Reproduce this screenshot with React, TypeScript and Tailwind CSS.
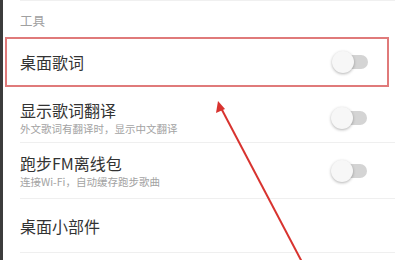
import React from "react";

function Toggle() {
  return (
    <div className="relative h-[22px] w-[36px] shrink-0">
      <div className="absolute left-[6px] right-0 top-[4px] h-[14px] rounded-full bg-[#d4d4d4]" />
      <div className="absolute left-0 top-0 h-[22px] w-[22px] rounded-full bg-[#f7f7f7] shadow-[0_1px_3px_rgba(0,0,0,0.3)]" />
    </div>
  );
}

function Row({ title, sub, toggle, pr = "pr-[28px]" }: { title: string; sub?: string; toggle?: boolean; pr?: string }) {
  return (
    <div className={"flex flex-1 items-center justify-between " + pr}>
      <div className="flex flex-col">
        <span className="text-[16px] leading-[20px] text-[#333]">{title}</span>
        {sub && <span className="mt-[2px] text-[10.5px] leading-[14px] text-[#a3a3a3]">{sub}</span>}
      </div>
      {toggle && <Toggle />}
    </div>
  );
}

export default function App() {
  return (
    <div
      className="relative flex h-[260px] w-[395px] overflow-hidden bg-white"
      style={{ fontFamily: '"Noto Sans CJK SC", "Noto Sans", sans-serif' }}
    >
      <div className="w-[3px] shrink-0 bg-[#3c3c3c]" />
      <div className="flex flex-1 flex-col">
        <div className="ml-[17px] h-[37px] border-t border-[#f0f0f0] pt-[12px] text-[12.5px] leading-[16px] text-[#a0a0a0]">
          工具
        </div>
        <div className="ml-[2px] mr-[6px] flex h-[50px] border-2 border-[#e07a7a] pl-[13px]">
          <Row title="桌面歌词" toggle pr="pr-[19px]" />
        </div>
        <div className="ml-[17px] flex h-[56px] border-b border-[#efefef] pt-[6px]">
          <Row title="显示歌词翻译" sub="外文歌词有翻译时，显示中文翻译" toggle />
        </div>
        <div className="ml-[17px] flex h-[56px] border-b border-[#efefef]">
          <Row title="跑步FM离线包" sub="连接Wi-Fi，自动缓存跑步歌曲" toggle />
        </div>
        <div className="ml-[17px] flex h-[54px] border-b border-[#efefef]">
          <Row title="桌面小部件" />
        </div>
        <div className="flex-1" />
      </div>
      <svg className="pointer-events-none absolute inset-0" width="395" height="260" viewBox="0 0 395 260">
        <line x1="221" y1="108" x2="302" y2="262" stroke="#d8332f" strokeWidth="2" />
        <polygon points="218,101 216,113 225,109" fill="#d8332f" />
      </svg>
    </div>
  );
}
